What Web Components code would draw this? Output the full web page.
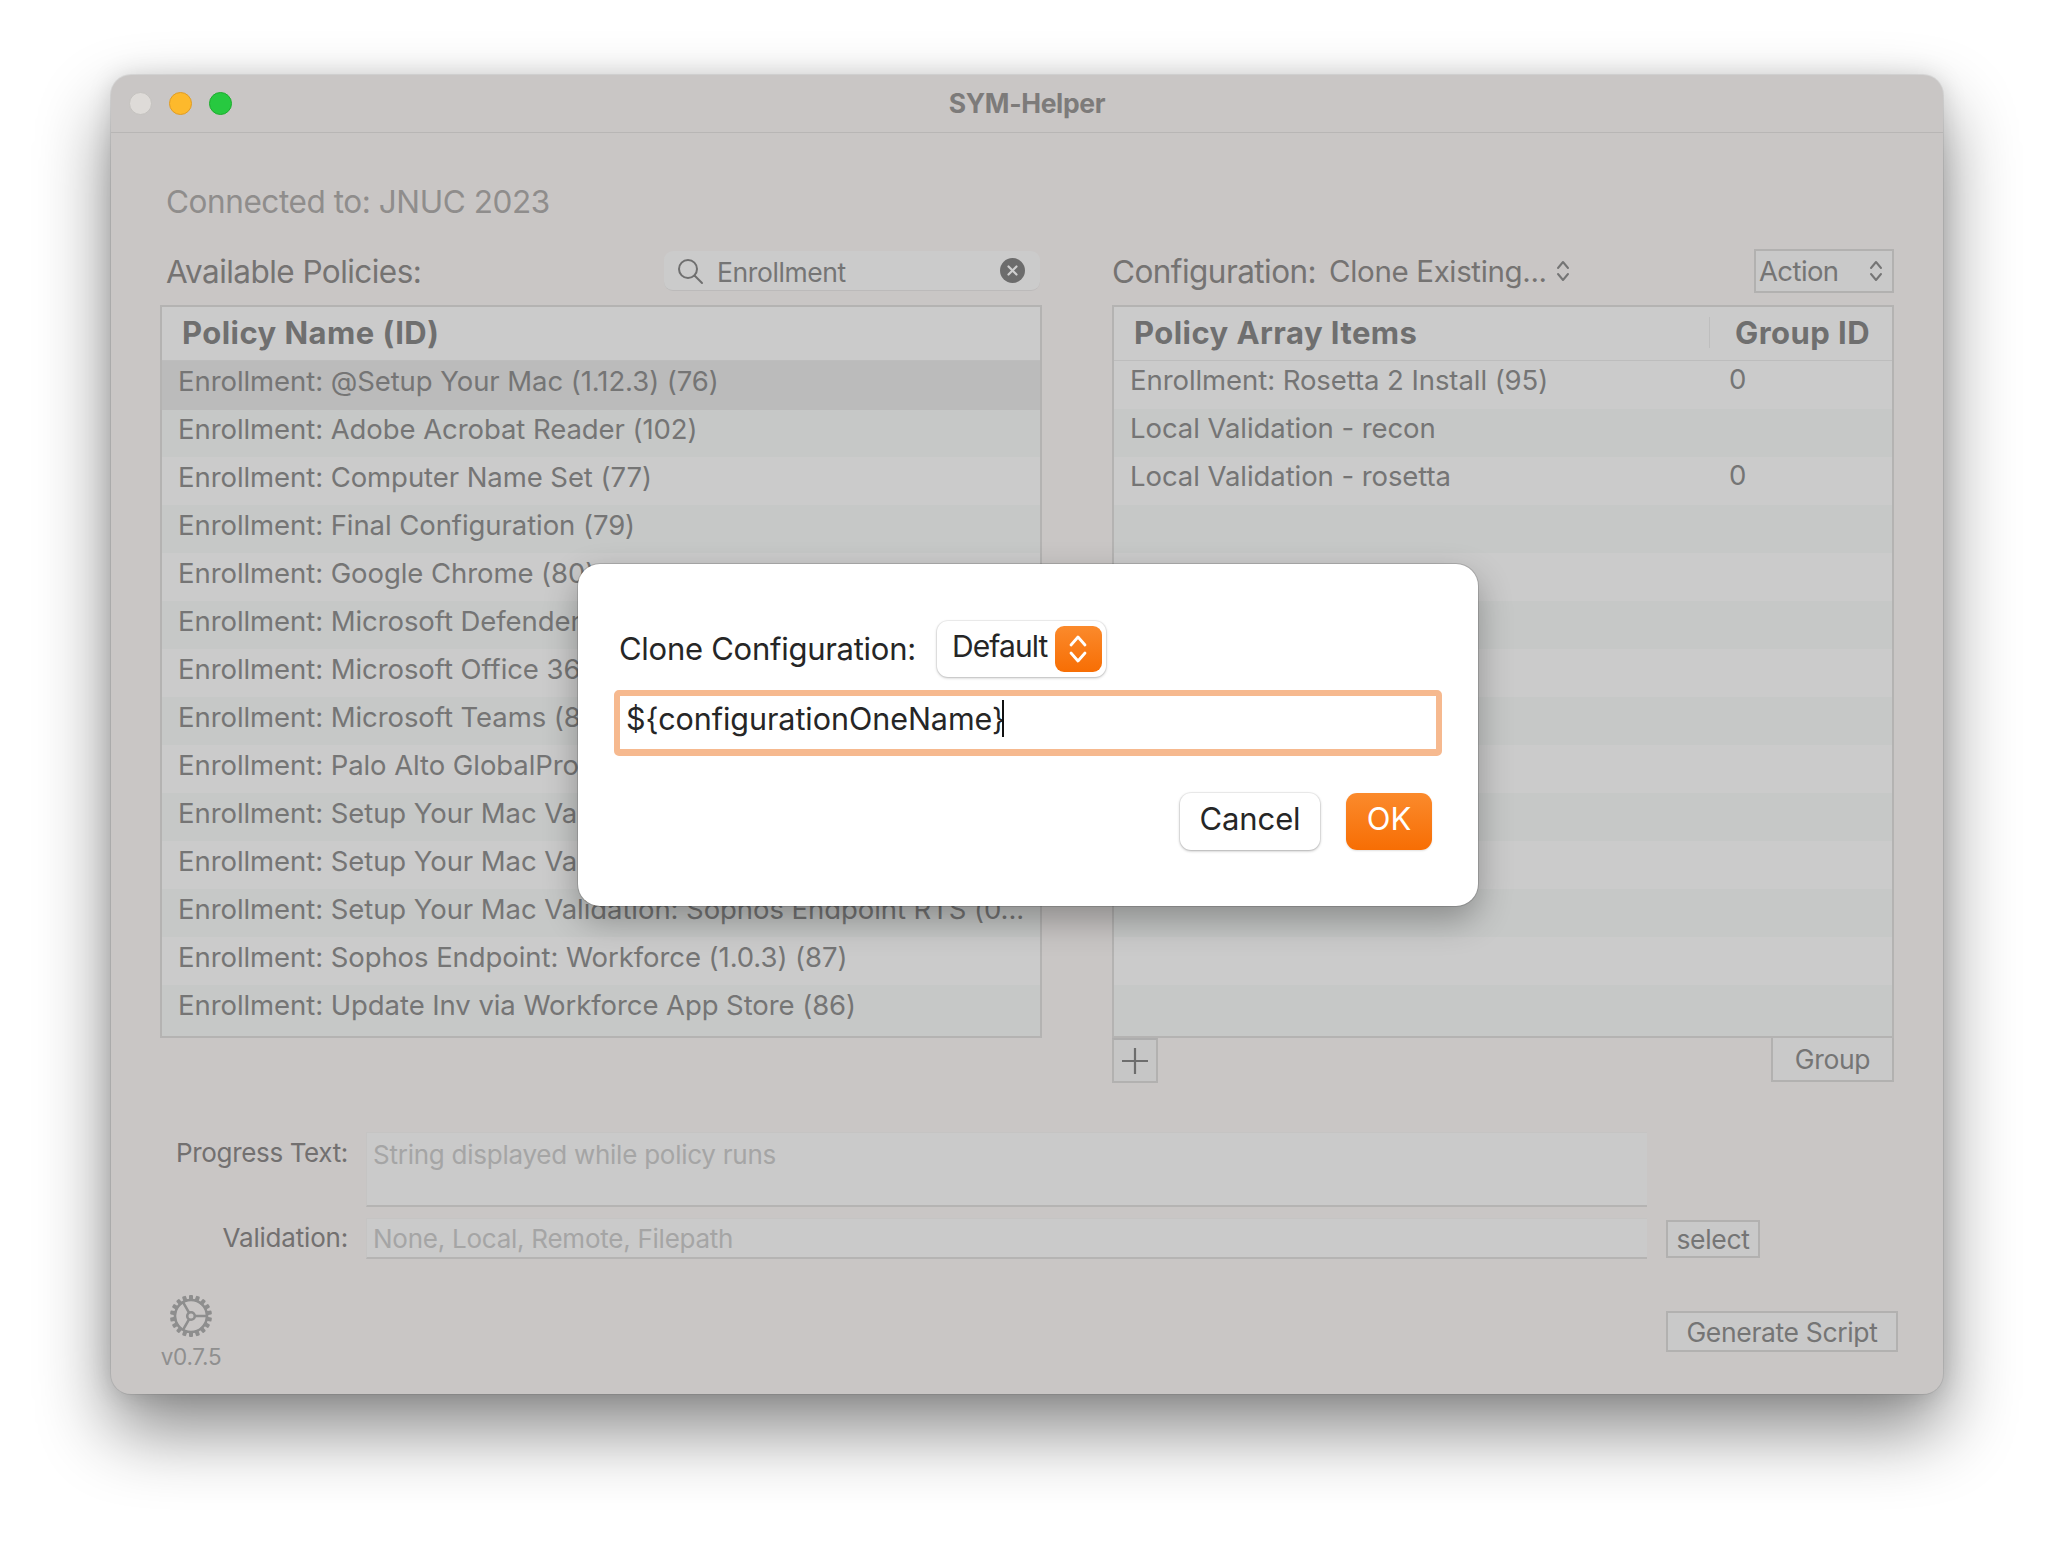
<!DOCTYPE html>
<html>
<head>
<meta charset="utf-8">
<title>SYM-Helper</title>
<style>
  html, body { margin: 0; background: #fff; }
  body { width: 2054px; height: 1542px; overflow: hidden; font-family: Inter, "Liberation Sans", sans-serif; }
  .page { padding: 75px 0 0 111px; }
  .connected { font-size: 31.5px; letter-spacing: -.43px; line-height: 40px; color: #8f8d8c; padding-left: 6px; position: relative; top: -1px; }
  .columns { display: grid; grid-template-columns: 882px 782px; column-gap: 70px; margin-top: 26px; }
  .col-head { display: flex; align-items: center; height: 44px; margin-bottom: 12px; font-size: 31.5px; letter-spacing: -.55px; color: #757372; }
  .col-head.left { padding: 0 2px 0 6px; justify-content: space-between; }
  .col-head .value { margin-left: 13px; font-size: 29.5px; letter-spacing: -.36px; }
  .col-head sym-chevrons { margin-left: 9px; }
  .col-head sym-button { margin-left: auto; }
  .under { display: flex; justify-content: space-between; align-items: flex-start; }
  .form { display: grid; grid-template-columns: 188px 1281px auto; column-gap: 18px; row-gap: 11px; margin-top: 49px; align-items: start; }
  .form label { text-align: right; font-size: 26px; letter-spacing: -.35px; color: #727070; padding-top: 5px; }
  .form label.low { padding-top: 4px; letter-spacing: -.2px; }
  .form sym-button { margin-top: 2px; margin-left: 1px; }
  .foot { display: flex; justify-content: space-between; align-items: flex-start; margin-top: 35px; margin-right: -4px; }
  .foot sym-button { margin-top: 17px; }
  .dlg-row { display: flex; align-items: center; padding-left: 5px; }
  .dlg-row label { font-size: 31px; letter-spacing: -.27px; color: #262626; margin-right: 21px; position: relative; top: -1px; }
  .dlg-actions { display: flex; justify-content: flex-end; gap: 26px; margin-top: 37px; padding-right: 10px; }
  .rows-right { --row-shift: 10px; --row-indent: 16px; }
</style>
</head>
<body>
<div class="page">
<sym-window title="SYM-Helper">
  <div class="connected">Connected to: JNUC 2023</div>
  <div class="columns">
    <div>
      <div class="col-head left">
        <span>Available Policies:</span>
        <sym-search value="Enrollment"></sym-search>
      </div>
      <sym-table>
        <span slot="head">Policy Name (ID)</span>
        <sym-row selected>Enrollment: @Setup Your Mac (1.12.3) (76)</sym-row>
        <sym-row>Enrollment: Adobe Acrobat Reader (102)</sym-row>
        <sym-row>Enrollment: Computer Name Set (77)</sym-row>
        <sym-row>Enrollment: Final Configuration (79)</sym-row>
        <sym-row>Enrollment: Google Chrome (80)</sym-row>
        <sym-row>Enrollment: Microsoft Defender</sym-row>
        <sym-row>Enrollment: Microsoft Office 365</sym-row>
        <sym-row>Enrollment: Microsoft Teams (8</sym-row>
        <sym-row>Enrollment: Palo Alto GlobalProtect</sym-row>
        <sym-row>Enrollment: Setup Your Mac Validation</sym-row>
        <sym-row>Enrollment: Setup Your Mac Validation</sym-row>
        <sym-row>Enrollment: Setup Your Mac Validation: Sophos Endpoint RTS (0...</sym-row>
        <sym-row>Enrollment: Sophos Endpoint: Workforce (1.0.3) (87)</sym-row>
        <sym-row>Enrollment: Update Inv via Workforce App Store (86)</sym-row>
      </sym-table>
    </div>
    <div>
      <div class="col-head">
        <span>Configuration:</span>
        <span class="value">Clone Existing...</span>
        <sym-chevrons></sym-chevrons>
        <sym-button kind="action">Action<sym-chevrons></sym-chevrons></sym-button>
      </div>
      <sym-table class="rows-right" second="Group ID">
        <span slot="head">Policy Array Items</span>
        <sym-row second="0">Enrollment: Rosetta 2 Install (95)</sym-row>
        <sym-row>Local Validation - recon</sym-row>
        <sym-row second="0">Local Validation - rosetta</sym-row>
        <sym-row></sym-row><sym-row></sym-row><sym-row></sym-row><sym-row></sym-row>
        <sym-row></sym-row><sym-row></sym-row><sym-row></sym-row><sym-row></sym-row>
        <sym-row></sym-row><sym-row></sym-row><sym-row></sym-row>
      </sym-table>
      <div class="under">
        <sym-button kind="plus"></sym-button>
        <sym-button kind="group">Group</sym-button>
      </div>
    </div>
  </div>
  <div class="form">
    <label>Progress Text:</label>
    <sym-field tall placeholder="String displayed while policy runs"></sym-field>
    <span></span>
    <label class="low">Validation:</label>
    <sym-field placeholder="None, Local, Remote, Filepath"></sym-field>
    <sym-button kind="select">select</sym-button>
  </div>
  <div class="foot">
    <sym-version version="v0.7.5"></sym-version>
    <sym-button kind="generate">Generate Script</sym-button>
  </div>

  <sym-dialog slot="overlay">
    <div class="dlg-row">
      <label>Clone Configuration:</label>
      <sym-popup>Default</sym-popup>
    </div>
    <sym-input value="${configurationOneName}"></sym-input>
    <div class="dlg-actions">
      <sym-dialog-button>Cancel</sym-dialog-button>
      <sym-dialog-button primary>OK</sym-dialog-button>
    </div>
  </sym-dialog>
</sym-window>
</div>

<script>
const chevronSvg = (color, width) => `
  <svg width="14" height="24" viewBox="0 0 14 24" fill="none" stroke="${color}" stroke-width="${width}" stroke-linecap="round" stroke-linejoin="round">
    <path d="M2 9 L7 3 L12 9"/><path d="M2 15 L7 21 L12 15"/>
  </svg>`;

class SymWindow extends HTMLElement {
  constructor() {
    super();
    this.attachShadow({ mode: "open" });
    this.shadowRoot.innerHTML = `
    <style>
      :host {
        display: block; position: relative; width: 1832px; height: 1319px; box-sizing: border-box;
        background: #c9c6c5; border-radius: 20px;
        box-shadow: 0 36px 72px rgba(0,0,0,.47), 0 0 24px rgba(0,0,0,.13), 0 0 0 1px rgba(0,0,0,.07);
      }
      .bar { display: flex; align-items: center; justify-content: center; position: relative; height: 57px; border-bottom: 1px solid #b8b6b5; }
      .title { font-size: 26.5px; font-weight: 700; letter-spacing: -.35px; color: #7d7b7a; padding-bottom: 2px; }
      .lights { position: absolute; left: 17.5px; top: 17px; display: flex; gap: 17px; }
      .lights i { display: block; width: 23px; height: 23px; border-radius: 50%; box-sizing: border-box; }
      .c { background: #dedbd8; border: 1px solid #c4c2bf; }
      .m { background: #fdb92c; border: 1px solid #e09c24; }
      .z { background: #27c940; border: 1px solid #1ead2e; }
      .body { padding: 50px 49px 0 49px; }
    </style>
    <div class="bar">
      <div class="lights"><i class="c"></i><i class="m"></i><i class="z"></i></div>
      <div class="title"></div>
    </div>
    <div class="body"><slot></slot></div>
    <slot name="overlay"></slot>
    `;
  }
  connectedCallback() {
    this.shadowRoot.querySelector(".title").textContent = this.getAttribute("title");
  }
}

class SymSearch extends HTMLElement {
  constructor() {
    super();
    this.attachShadow({ mode: "open" });
    this.shadowRoot.innerHTML = `
    <style>
      :host {
        display: flex; align-items: center; width: 376px; height: 40px; box-sizing: border-box; padding: 0 15px 0 12px;
        background: #cbcbcb; border-radius: 9px; border-bottom: 1px solid #bcbaba;
      }
      span { margin-left: 13px; flex: 1; font-size: 26.5px; letter-spacing: -.4px; color: #757575; position: relative; top: 1px; }
    </style>
    <svg width="28" height="28" viewBox="0 0 28 28" fill="none" stroke="#6f6f6f" stroke-width="2" stroke-linecap="round">
      <circle cx="12" cy="12" r="9"/><path d="M18.5 18.5 L26 26"/>
    </svg>
    <span></span>
    <svg width="25" height="25" viewBox="0 0 25 25">
      <circle cx="12.5" cy="12.5" r="12.5" fill="#6c6c6c"/>
      <path d="M8.5 8.5 L16.5 16.5 M16.5 8.5 L8.5 16.5" stroke="#cfcfcf" stroke-width="2.2" stroke-linecap="round"/>
    </svg>
    `;
  }
  connectedCallback() {
    this.shadowRoot.querySelector("span").textContent = this.getAttribute("value");
  }
}

class SymChevrons extends HTMLElement {
  constructor() {
    super();
    this.attachShadow({ mode: "open" });
    this.shadowRoot.innerHTML = `<style>:host { display: inline-flex; align-items: center; }</style>` + chevronSvg("#757575", 2);
  }
}

class SymTable extends HTMLElement {
  constructor() {
    super();
    this.attachShadow({ mode: "open" });
    this.shadowRoot.innerHTML = `
    <style>
      :host { display: block; box-sizing: border-box; height: 733px; border: 2px solid #b4b3b2; background: #c6c8c7; overflow: hidden; }
      .head { display: flex; align-items: center; height: 54px; padding: 0 0 2px 20px; box-sizing: border-box; border-bottom: 1px solid #bdbdbd; background: #cbcbcb;
              font-size: 31px; font-weight: 700; letter-spacing: .45px; color: #6f6f6f; }
      .head slot { display: block; flex: 1; }
      .second { display: none; align-items: center; height: 31px; width: 183px; box-sizing: border-box; padding-left: 25px; border-left: 1px solid #bebebe; white-space: nowrap; }
      :host([second]) .second { display: flex; }
    </style>
    <div class="head"><slot name="head"></slot><div class="second"></div></div>
    <slot></slot>
    `;
  }
  connectedCallback() {
    if (this.hasAttribute("second")) {
      this.shadowRoot.querySelector(".second").textContent = this.getAttribute("second");
    }
  }
}

class SymRow extends HTMLElement {
  constructor() {
    super();
    this.attachShadow({ mode: "open" });
    this.shadowRoot.innerHTML = `
    <style>
      :host { display: flex; height: 48px; box-sizing: border-box; padding: 0 0 var(--row-shift, 8px) var(--row-indent, 16px); align-items: center;
              font-size: 27.5px; letter-spacing: -.07px; color: #757575; background: #cbcbcb; white-space: nowrap; }
      :host(:nth-of-type(even)) { background: #c6c8c7; }
      :host([selected]) { background: #bbbbbb; box-shadow: 0 1px 0 #bbbbbb; position: relative; }
      .main { flex: 1; overflow: hidden; }
      .second { display: none; width: 163px; padding-bottom: 2px; }
      :host([second]) .second { display: block; }
    </style>
    <div class="main"><slot></slot></div>
    <div class="second"></div>
    `;
  }
  connectedCallback() {
    const second = this.getAttribute("second");
    if (second) this.shadowRoot.querySelector(".second").textContent = second;
  }
}

class SymButton extends HTMLElement {
  constructor() {
    super();
    this.attachShadow({ mode: "open" });
    this.shadowRoot.innerHTML = `
    <style>
      :host { display: inline-flex; align-items: center; justify-content: center; box-sizing: border-box; border: 2px solid #b2b1b0;
              background: #c9c9c9; color: #757575; font-size: 26.5px; letter-spacing: -.35px; white-space: nowrap; }
      :host([kind="action"]) { width: 140px; height: 44px; justify-content: space-between; padding: 0 9px 0 3px; font-size: 27.5px; letter-spacing: -.6px; }
      :host([kind="plus"]) { width: 46px; height: 45px; background: #c6c6c6; border-top-color: #adadad; }
      :host([kind="group"]) { width: 123px; height: 44px; border-top: 0; }
      :host([kind="select"]) { width: 94px; height: 38px; }
      :host([kind="generate"]) { width: 232px; height: 41px; }
      svg { display: none; }
      :host([kind="plus"]) svg { display: block; }
    </style>
    <svg width="28" height="28" viewBox="0 0 28 28" stroke="#6d6d6d" stroke-width="2.2"><path d="M14 1 V27 M1 14 H27"/></svg>
    <slot></slot>
    `;
  }
}

class SymField extends HTMLElement {
  constructor() {
    super();
    this.attachShadow({ mode: "open" });
    this.shadowRoot.innerHTML = `
    <style>
      :host { display: block; box-sizing: border-box; height: 41px; padding: 4px 0 0 6px; background: #cacaca;
              border: 1px solid #c5c4c3; border-bottom: 2px solid #b5b4b3; border-width: 1px 0 2px 1px;
              font-size: 26px; letter-spacing: -.25px; color: #a5a5a5; line-height: 32px; }
      :host([tall]) { height: 75px; padding-top: 6px; }
    </style>
    <span></span>
    `;
  }
  connectedCallback() {
    this.shadowRoot.querySelector("span").textContent = this.getAttribute("placeholder");
  }
}

class SymVersion extends HTMLElement {
  constructor() {
    super();
    this.attachShadow({ mode: "open" });
    const teeth = Array.from({ length: 18 }, (_, i) =>
      `<rect x="19" y="0" width="4" height="6" rx="1" transform="rotate(${i * 20} 21 21)"/>`).join("");
    this.shadowRoot.innerHTML = `
    <style>
      :host { display: flex; flex-direction: column; align-items: center; width: 62px; font-size: 22.5px; letter-spacing: -.25px; color: #8f8f8f; }
      svg { display: block; margin: 1px 0 6px; }
    </style>
    <svg width="42" height="42" viewBox="0 0 42 42" fill="none" stroke="#8e8e8e" stroke-width="2.6">
      <circle cx="21" cy="21" r="16"/>
      <circle cx="21" cy="21" r="3.8"/>
      <path d="M25 21 H37 M19 17.7 L13 7.2 M19 24.3 L13 34.8"/>
      <g fill="#8e8e8e" stroke="none">${teeth}</g>
    </svg>
    <div></div>
    `;
  }
  connectedCallback() {
    this.shadowRoot.querySelector("div").textContent = this.getAttribute("version");
  }
}

class SymDialog extends HTMLElement {
  constructor() {
    super();
    this.attachShadow({ mode: "open" });
    this.shadowRoot.innerHTML = `
    <style>
      :host { display: block; position: absolute; left: 467px; top: 489px; width: 900px; height: 342px; box-sizing: border-box;
              padding: 57px 36px 0 36px; background: #fff; border-radius: 22px;
              box-shadow: 0 14px 34px rgba(0,0,0,.3), 0 0 0 1px rgba(0,0,0,.14); }
    </style>
    <slot></slot>
    `;
  }
}

class SymPopup extends HTMLElement {
  constructor() {
    super();
    this.attachShadow({ mode: "open" });
    this.shadowRoot.innerHTML = `
    <style>
      :host { display: flex; align-items: center; justify-content: space-between; box-sizing: border-box; width: 169px; height: 56px;
              padding: 0 4px 0 15px; background: #fff; border-radius: 11px; font-size: 30px; letter-spacing: -.9px; color: #262626;
              box-shadow: 0 1px 3px rgba(0,0,0,.25), 0 0 0 1px rgba(0,0,0,.05); }
      .text { position: relative; top: -3px; }
      .btn { display: flex; align-items: center; justify-content: center; width: 47px; height: 46px; border-radius: 9px;
             background: linear-gradient(#fb8a2c, #f76e04); }
    </style>
    <span class="text"><slot></slot></span>
    <div class="btn">
      <svg width="20" height="30" viewBox="0 0 20 30" fill="none" stroke="#fff" stroke-width="2.8" stroke-linecap="round" stroke-linejoin="round">
        <path d="M3 11 L10 3 L17 11"/><path d="M3 19 L10 27 L17 19"/>
      </svg>
    </div>
    `;
  }
}

class SymInput extends HTMLElement {
  constructor() {
    super();
    this.attachShadow({ mode: "open" });
    this.shadowRoot.innerHTML = `
    <style>
      :host { display: flex; align-items: center; box-sizing: border-box; height: 66px; margin-top: 13px; padding: 0 0 8px 6px;
              border: 6px solid #f6b98f; border-bottom-width: 7px; border-radius: 5px; background: #fff;
              font-size: 30.5px; letter-spacing: -.05px; color: #262626; white-space: nowrap; }
      i { display: inline-block; width: 2px; height: 37px; background: #111; margin-left: -3px; position: relative; top: 0; }
    </style>
    <span></span><i></i>
    `;
  }
  connectedCallback() {
    this.shadowRoot.querySelector("span").textContent = this.getAttribute("value");
  }
}

class SymDialogButton extends HTMLElement {
  constructor() {
    super();
    this.attachShadow({ mode: "open" });
    this.shadowRoot.innerHTML = `
    <style>
      :host { display: flex; align-items: center; justify-content: center; box-sizing: border-box; width: 140px; height: 57px; padding-bottom: 7px;
              background: #fff; border-radius: 11px; font-size: 31px; letter-spacing: -.1px; color: #262626;
              box-shadow: 0 1px 3px rgba(0,0,0,.3), 0 0 0 1px rgba(0,0,0,.05); }
      :host([primary]) { width: 86px; color: #fff; background: linear-gradient(#fb8a2c, #f76e04); box-shadow: 0 1px 2px rgba(0,0,0,.12); }
    </style>
    <slot></slot>
    `;
  }
}

customElements.define("sym-window", SymWindow);
customElements.define("sym-search", SymSearch);
customElements.define("sym-chevrons", SymChevrons);
customElements.define("sym-table", SymTable);
customElements.define("sym-row", SymRow);
customElements.define("sym-button", SymButton);
customElements.define("sym-field", SymField);
customElements.define("sym-version", SymVersion);
customElements.define("sym-dialog", SymDialog);
customElements.define("sym-popup", SymPopup);
customElements.define("sym-input", SymInput);
customElements.define("sym-dialog-button", SymDialogButton);
</script>
</body>
</html>
